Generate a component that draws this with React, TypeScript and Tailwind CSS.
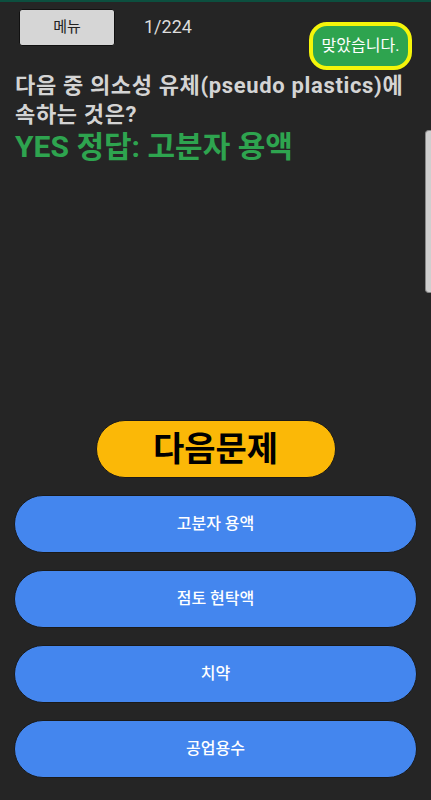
import React from 'react';

const FONT = { fontFamily: 'Roboto, "Noto Sans CJK KR", sans-serif' };

const choices = ['고분자 용액', '점토 현탁액', '치약', '공업용수'];

export default function App() {
  return (
    <div className="relative h-[800px] w-full overflow-hidden bg-[#252525] flex flex-col" style={FONT}>
      {/* 상단 라인 */}
      <div className="h-[2px] bg-[#0c4f3f]" />

      {/* 헤더 */}
      <div className="flex items-start">
        <button className="ml-[19px] mt-[7px] w-[96px] h-[37px] rounded-[3px] border border-[#111] bg-[#d6d6d6] text-[15px] text-[#222]">
          메뉴
        </button>
        <span className="ml-[29px] mt-[15px] text-[18px] leading-5 text-[#dddddd]">1/224</span>
        <div className="ml-auto mr-[19px] mt-[20px] h-[48px] w-[103px] rounded-[18px] border-[4px] border-[#f5f50a] bg-[#2ea44f] flex items-center justify-center text-[16px] text-white">
          맞았습니다.
        </div>
      </div>

      {/* 문제 */}
      <div className="px-[15px] mt-[1px]">
        <p className="break-keep text-[22px] leading-[29px] font-bold text-[#d4d4d4] tracking-[0.65px]">
          다음 중 의소성 유체(pseudo plastics)에 속하는 것은?
        </p>
        <p className="text-[30px] leading-[36px] font-bold text-[#2ea44f]">YES 정답: 고분자 용액</p>
      </div>

      {/* 버튼 */}
      <div className="mt-auto pb-[22px] flex flex-col items-center">
        <button className="w-[240px] h-[58px] rounded-full border border-[#1a1a1a] bg-[#fbb807] text-[34px] font-bold text-black">
          다음문제
        </button>
        <div className="mt-[17px] w-full px-[14px] flex flex-col gap-[17px]">
          {choices.map((c) => (
            <button
              key={c}
              className="h-[58px] w-full rounded-full border border-[#1a1a1a] bg-[#4486ee] text-[16px] font-medium text-white"
            >
              {c}
            </button>
          ))}
        </div>
      </div>

      {/* 오른쪽 스크롤 핸들 */}
      <div className="absolute right-0 top-[130px] h-[163px] w-[6px] rounded-l-[4px] border border-r-0 border-[#888] bg-[#cfcfcf]" />
    </div>
  );
}
